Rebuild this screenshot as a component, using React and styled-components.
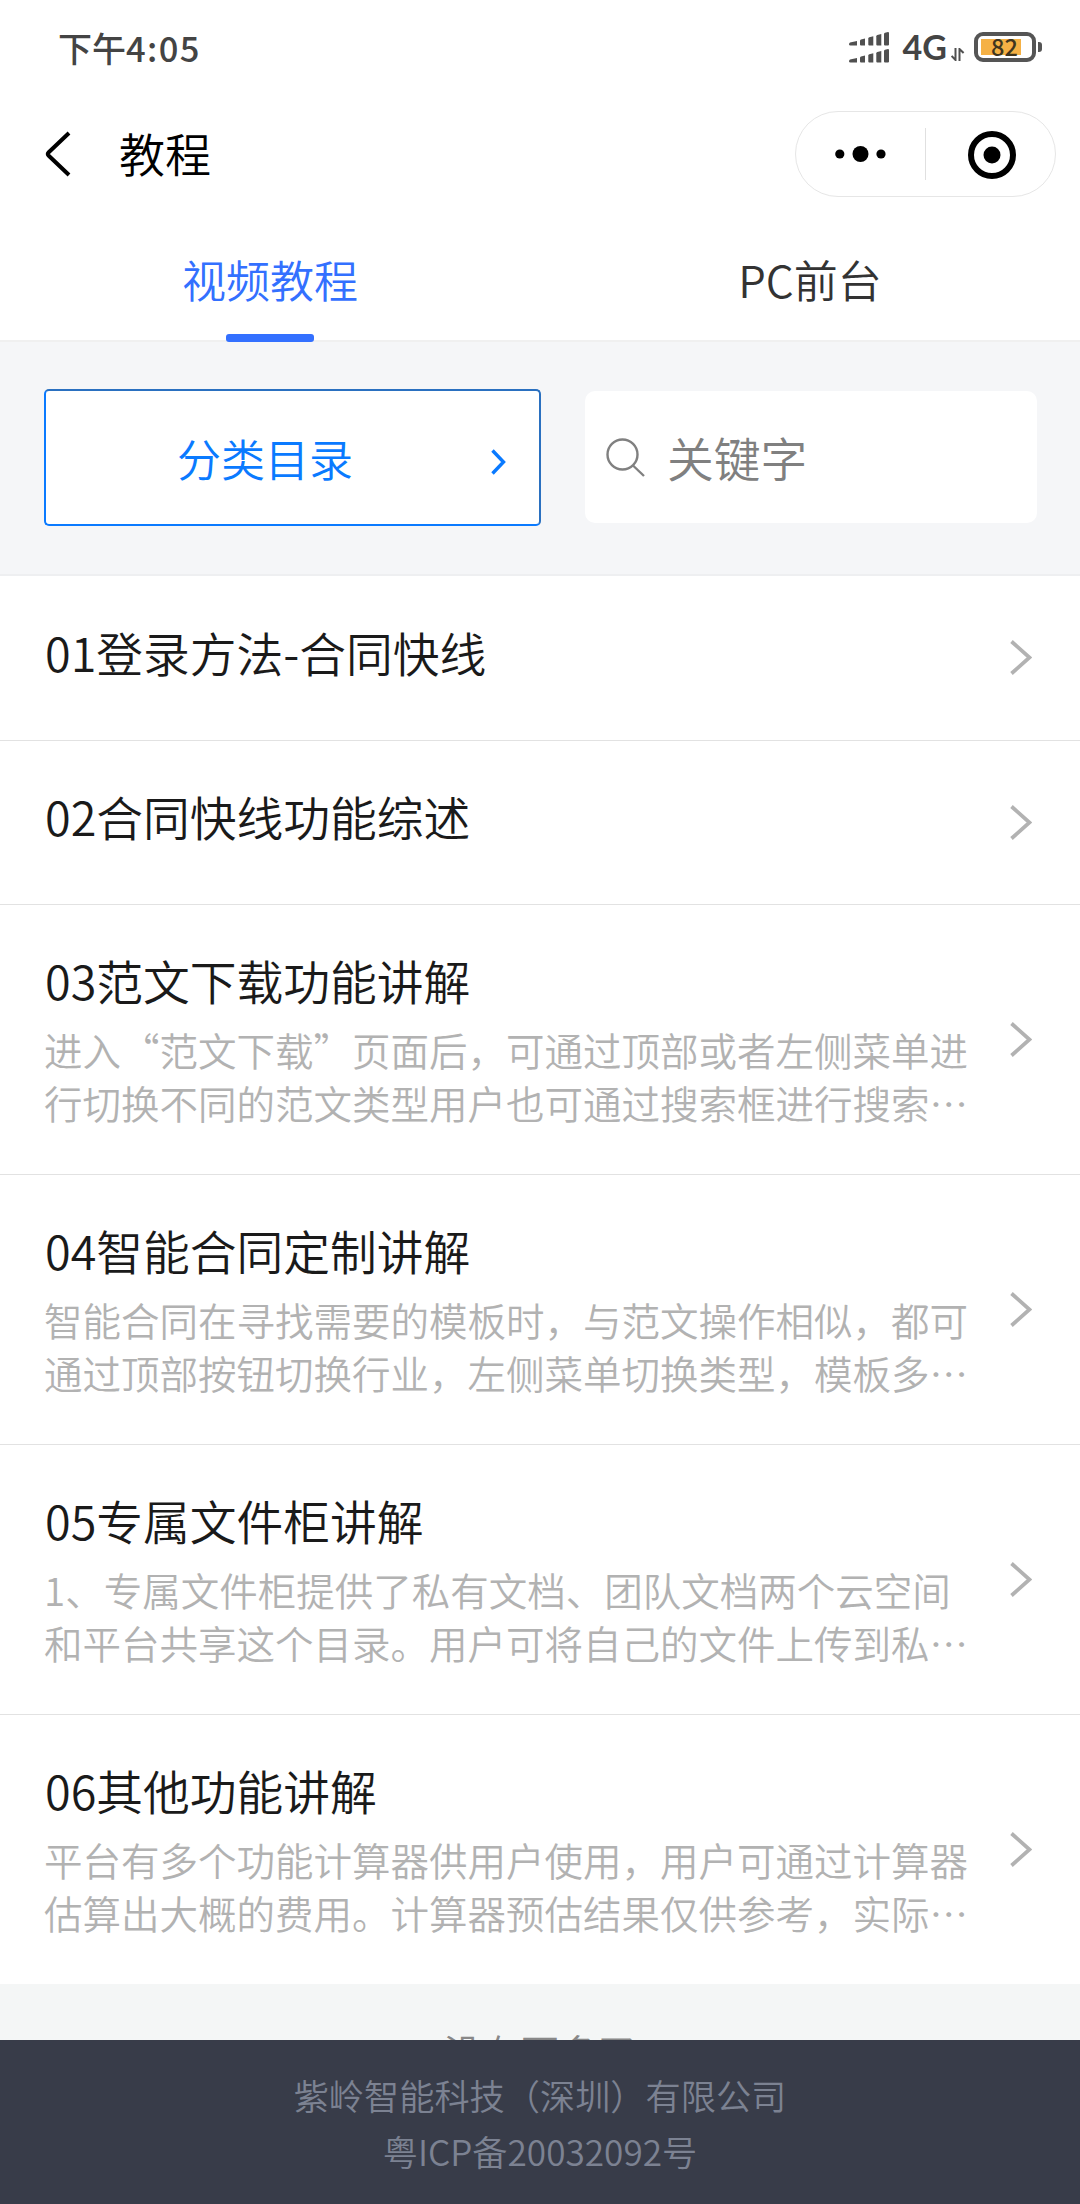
import React from 'react';
import styled, { createGlobalStyle } from 'styled-components';

const GlobalStyle = createGlobalStyle`
* {
  box-sizing: border-box;
}
body {
  margin: 0;
  background: #f4f6f6;
  font-family: 'Noto Sans CJK SC', 'Noto Sans', sans-serif;
  font-weight: 350;
  text-spacing-trim: space-all;
}
`;

const Page = styled.div`
width: 1080px;
height: 2204px;
overflow: hidden;
display: flex;
flex-direction: column;
`;

const StatusBar = styled.div`
height: 96px;
flex: none;
background: #fff;
display: flex;
align-items: center;
padding: 0 38px 2px 58px;
color: #444;
`;

const Time = styled.div`
font-size: 34px;
font-weight: 500;
line-height: 40px;
margin-right: auto;
span {
  font-size: 34.5px;
  letter-spacing: 1.4px;
}
`;

const Network = styled.div`
font-family: Lato, sans-serif;
font-size: 34px;
font-weight: 700;
line-height: 40px;
margin: 0 4px 0 14px;
`;

const Battery = styled.div`
width: 62px;
height: 30px;
border: 4px solid #555;
border-radius: 9px;
margin-left: 9px;
padding: 2px 4px 4px 3px;
display: flex;
background: linear-gradient(#f5b145, #f5b145) 3px 3px / 40px 16px no-repeat;
justify-content: center;
align-items: center;
font-family: 'Noto Sans CJK SC', sans-serif;
font-size: 23.5px;
font-weight: 500;
color: #40351f;
`;

const BatteryTip = styled.div`
width: 4px;
height: 10px;
border-radius: 0 3px 3px 0;
background: #555;
margin-left: 2px;
`;

const NavBar = styled.div`
height: 124px;
flex: none;
background: #fff;
display: flex;
align-items: center;
padding: 0 24px 8px 45px;
`;

const NavTitle = styled.div`
font-size: 46px;
line-height: 60px;
margin: -4px auto 0 48px;
color: #000;
`;

const Capsule = styled.div`
width: 261px;
height: 86px;
border: 1px solid #e6e6e6;
border-radius: 43px;
display: flex;
align-items: center;
`;

const CapsuleButton = styled.div`
width: 129px;
display: flex;
justify-content: center;
&:first-child {
  width: 130px;
  border-right: 1px solid #e0e0e0;
}
&:last-child {
  padding: 1px 0 0 3px;
}
`;

const Tabs = styled.div`
height: 122px;
flex: none;
background: #fff;
border-bottom: 2px solid #f0f0f0;
display: flex;
`;

const Tab = styled.div`
flex: 1;
height: 122px;
display: flex;
flex-direction: column;
align-items: center;
justify-content: space-between;
padding-top: 28px;
font-size: 44px;
line-height: 62px;
color: ${({ active }) => active ? '#3370ff' : '#333'};
&::after {
  content: '';
  width: 88px;
  height: 8px;
  border-radius: 3px;
  background: ${({ active }) => active ? '#3370ff' : 'transparent'};
}
`;

const Filters = styled.div`
height: 234px;
flex: none;
background: #f5f6f8;
border-bottom: 2px solid #eeeff1;
display: flex;
align-items: center;
gap: 44px;
padding: 0 43px 2px 44px;
`;

const Category = styled.div`
width: 497px;
height: 137px;
background: #fff;
border: 2px solid #0a7aff;
border-top-color: #2a70c0;
border-right-color: #2a70c0;
border-radius: 5px;
display: flex;
align-items: center;
padding-right: 33px;
color: #0a7aff;
font-size: 44px;
svg {
  margin-top: 9px;
}
`;

const CategoryName = styled.div`
flex: 1;
text-align: center;
padding: 1px 7px 0 0;
`;

const Search = styled.div`
flex: 1;
height: 132px;
background: #fff;
border-radius: 10px;
display: flex;
align-items: center;
padding: 0 0 2px 21px;
gap: 22px;
color: #808080;
font-size: 46.75px;
svg {
  margin-top: 3px;
}
`;

const List = styled.div`
flex: none;
background: #fff;
`;

const ItemText = styled.div`
width: 926px;
align-self: flex-start;
padding-top: 42px;
`;

const Item = styled.div`
height: ${({ tall }) => tall ? '270px' : '164.5px'};
display: flex;
align-items: center;
justify-content: space-between;
padding: 0 48px 0 44px;
border-bottom: 1px solid #e2e2e2;
&:first-child ${ItemText} {
  padding-top: 43px;
}
&:last-child {
  height: 269px;
  border-bottom: none;
}
`;

const ItemTitle = styled.div`
padding-left: 1px;
font-size: 46.75px;
line-height: 66px;
color: #1a1a1a;
`;

const ItemDesc = styled.div`
margin-top: 10px;
font-size: 38.5px;
line-height: 53px;
color: #b2b2b2;
`;

const NoMore = styled.div`
height: 56px;
flex: none;
overflow: hidden;
padding-top: 39px;
text-align: center;
font-size: 38.5px;
line-height: 56px;
color: #888;
`;

const Footer = styled.div`
height: 164px;
flex: none;
background: #383c49;
padding-top: 27px;
text-align: center;
font-size: 35.2px;
line-height: 56.3px;
color: #7c8292;
`;

const items = [
  { title: '01登录方法-合同快线' },
  { title: '02合同快线功能综述' },
  {
    title: '03范文下载功能讲解',
    desc: '进入“范文下载”页面后，可通过顶部或者左侧菜单进行切换不同的范文类型用户也可通过搜索框进行搜索…',
  },
  {
    title: '04智能合同定制讲解',
    desc: '智能合同在寻找需要的模板时，与范文操作相似，都可通过顶部按钮切换行业，左侧菜单切换类型，模板多…',
  },
  {
    title: '05专属文件柜讲解',
    desc: '1、专属文件柜提供了私有文档、团队文档两个云空间和平台共享这个目录。用户可将自己的文件上传到私…',
  },
  {
    title: '06其他功能讲解',
    desc: '平台有多个功能计算器供用户使用，用户可通过计算器估算出大概的费用。计算器预估结果仅供参考，实际…',
  },
];

const Signal = () => (
  <svg width="40" height="31" viewBox="0 0 40 31" fill="#505050">
    {[0, 17].map((y) => (
      <g key={y} transform={`translate(0 ${y})`}>
        <path d="M1 10.5L8 9v4.5H1.5Q0 13.5 0 12.5Q0 11 1 10.5z" />
        <path d="M12 7.6L16 6.6V13.5H12Q11 13.5 11 12.5V9Q11 8 12 7.6z" />
        <path d="M20.3 5.3L24.3 4.3V13.5H20.3Q19.3 13.5 19.3 12.5V6.5Q19.3 5.6 20.3 5.3z" />
        <path d="M28.3 3L32.3 2V13.5H28.3Q27.3 13.5 27.3 12.5V4.2Q27.3 3.3 28.3 3z" />
        <path d="M36 .8L39 0Q40 0 40 1V12.5Q40 13.5 39 13.5H36Q35 13.5 35 12.5V2Q35 1 36 .8z" />
      </g>
    ))}
  </svg>
);

const ArrowsIcon = styled.svg`
margin-top: 14px;
`;

const DataArrows = () => (
  <ArrowsIcon width="14" height="13" viewBox="0 0 14 13" fill="none" stroke="#505050" strokeWidth="2">
    <path d="M4.5 0V12L.6 8" />
    <path d="M8.5 13V1L12.6 5" />
  </ArrowsIcon>
);

const Chevron = ({ width, height, stroke, color, left }) => (
  <svg width={width} height={height} viewBox={`0 0 ${width} ${height}`} fill="none" stroke={color} strokeWidth={stroke}>
    <path
      d={left
        ? `M${width - 2} 2L3.5 ${height / 2 - 1.5}Q2 ${height / 2} 3.5 ${height / 2 + 1.5}L${width - 2} ${height - 2}`
        : `M1.5 1.5L${width - 2.5} ${height / 2}L1.5 ${height - 1.5}`}
    />
  </svg>
);

const App = () => {
  return (
    <Page>
      <GlobalStyle />
      <StatusBar>
        <Time>下午<span>4:05</span></Time>
        <Signal />
        <Network>4G</Network>
        <DataArrows />
        <Battery>82</Battery>
        <BatteryTip />
      </StatusBar>
      <NavBar>
        <Chevron left width={26} height={46} stroke={4} color="#000" />
        <NavTitle>教程</NavTitle>
        <Capsule>
          <CapsuleButton>
            <svg width="52" height="52" viewBox="0 0 52 52">
              <circle cx="4.8" cy="26" r="4.6" />
              <circle cx="25.5" cy="26" r="8" />
              <circle cx="46" cy="26" r="4.6" />
            </svg>
          </CapsuleButton>
          <CapsuleButton>
            <svg width="48" height="48" viewBox="0 0 48 48">
              <circle cx="24" cy="24" r="21" fill="none" stroke="#000" strokeWidth="6" />
              <circle cx="24" cy="24" r="8.5" />
            </svg>
          </CapsuleButton>
        </Capsule>
      </NavBar>
      <Tabs>
        <Tab active>视频教程</Tab>
        <Tab>PC前台</Tab>
      </Tabs>
      <Filters>
        <Category>
          <CategoryName>分类目录</CategoryName>
          <Chevron width={15} height={26} stroke={3.4} color="#0a7aff" />
        </Category>
        <Search>
          <svg width="39" height="39" viewBox="0 0 39 39" fill="none" stroke="#808080" strokeWidth="2.4">
            <circle cx="16.5" cy="16.5" r="15" />
            <path d="M27 27.5L38 38" />
          </svg>
          关键字
        </Search>
      </Filters>
      <List>
        {items.map(({ title, desc }) => (
          <Item key={title} tall={desc ? 1 : 0}>
            <ItemText>
              <ItemTitle>{title}</ItemTitle>
              {desc && <ItemDesc>{desc}</ItemDesc>}
            </ItemText>
            <Chevron width={22} height={35} stroke={3.8} color="#b2b2b2" />
          </Item>
        ))}
      </List>
      <NoMore>没有更多了</NoMore>
      <Footer>
        <div>紫岭智能科技（深圳）有限公司</div>
        <div>粤ICP备20032092号</div>
      </Footer>
    </Page>
  )
}
export default App;
